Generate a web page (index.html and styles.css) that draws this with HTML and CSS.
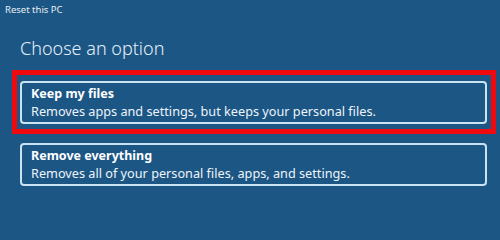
FILE: index.html
```html
<!DOCTYPE html>
<html>
<head>
	<meta charset="utf-8">
	<title>Reset this PC</title>
	<link rel="stylesheet" href="styles.css">
</head>
<body>
  <div class="titlebar">Reset this PC</div>

  <div class="content">
    <h1 class="heading">Choose an option</h1>

    <div class="options">
      <div class="highlight">
        <div class="option">
          <div class="option-title">Keep my files</div>
          <div class="option-desc">Removes apps and settings, but keeps your personal files.</div>
        </div>
      </div>

      <div class="option">
        <div class="option-title">Remove everything</div>
        <div class="option-desc">Removes all of your personal files, apps, and settings.</div>
      </div>
    </div>
  </div>
</body>
</html>
```

FILE: styles.css
```css
body {
  margin: 0;
  height: 240px;
  background-color: #1c5685;
  color: #fff;
  font-family: "Noto Sans", "Open Sans", sans-serif;
  overflow: hidden;
}

.titlebar {
  padding: 3px 5px 0 5px;
  height: 15px;
  font-size: 9.5px;
  line-height: 14px;
  color: #e8eef4;
}

.content {
  padding: 0 13px 0 20px;
}

.heading {
  margin: 17px 0 0 0;
  font-size: 18px;
  font-weight: 300;
  line-height: 26px;
  color: #e6f0f8;
}

.options {
  margin-top: 9px;
  display: flex;
  flex-direction: column;
  gap: 9px;
}

/* red annotation box round the first choice */
.highlight {
  border: 5px solid #ee0a0e;
  margin: 0 -9px 0 -8px;
  padding: 6px 4px 5px 3px;
}

.option {
  border: 2px solid #c9e3f3;
  border-radius: 4px;
  padding: 2px 10px 2px 9px;
  height: 35px;
}

.option-title {
  font-size: 12.5px;
  font-weight: 700;
  line-height: 17px;
}

.option-desc {
  font-size: 12.7px;
  line-height: 18px;
  color: #eef4f9;
}
```
